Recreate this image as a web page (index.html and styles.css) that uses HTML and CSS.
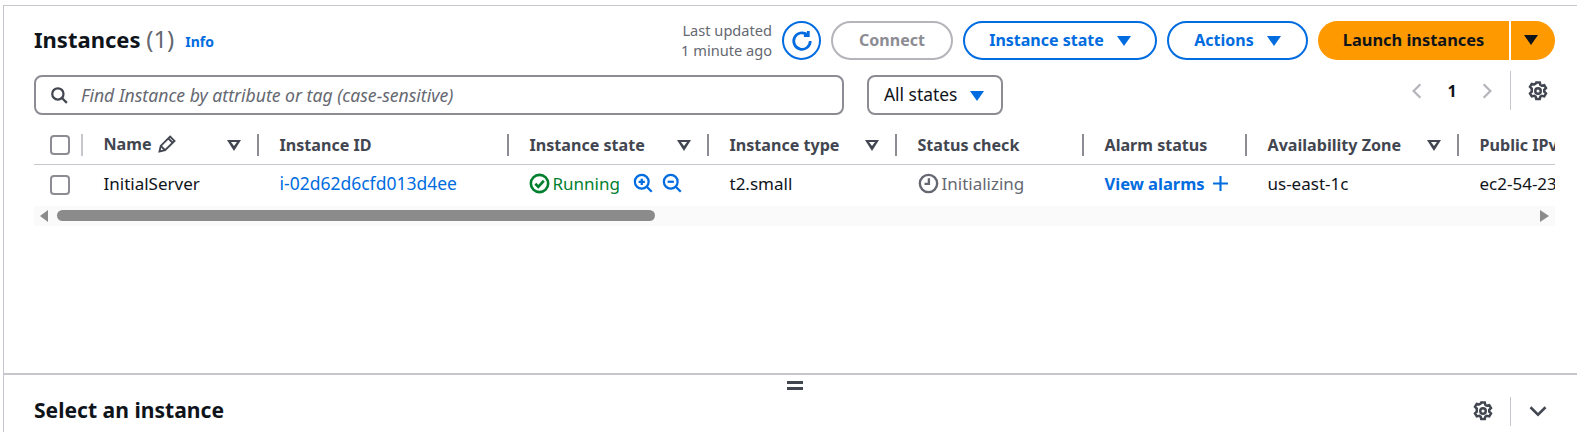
FILE: index.html
```html
<!DOCTYPE html>
<html lang="en">
<head>
  <meta charset="UTF-8">
  <title>Instances</title>
  <link rel="stylesheet" href="styles.css">
</head>
<body>
  <div class="page">
    <section class="pane">
      <div class="toolbar">
        <h1 class="title">Instances <span class="count">(1)</span></h1>
        <a class="info" href="#">Info</a>
        <div class="actions">
          <div class="updated">Last updated<br>1 minute ago</div>
          <button class="btn btn-round" aria-label="Refresh">
            <svg viewBox="0 0 16 16" width="22" height="22" class="ico-line"><path d="M14 8a6 6 0 1 1-2.2-4.6"/><path d="M12.6 .8v3.2H9.4"/></svg>
          </button>
          <button class="btn btn-off btn-connect">Connect</button>
          <button class="btn btn-state">Instance state <i class="caret"></i></button>
          <button class="btn btn-actions">Actions <i class="caret"></i></button>
          <div class="launch">
            <button class="launch-main">Launch instances</button>
            <button class="launch-drop" aria-label="More"><i class="caret caret-dark"></i></button>
          </div>
        </div>
      </div>

      <div class="filters">
        <div class="search">
          <svg viewBox="0 0 16 16" width="18" height="18" class="ico-search"><circle cx="7" cy="7" r="5"/><path d="M10.6 10.6 15 15"/></svg>
          <span class="placeholder">Find Instance by attribute or tag (case-sensitive)</span>
        </div>
        <div class="select"><span class="select-label">All states</span> <i class="caret"></i></div>
        <div class="pager">
          <svg viewBox="0 0 16 16" width="18" height="18" class="ico-pager"><path d="M11 2 5 8l6 6"/></svg>
          <span class="page-no">1</span>
          <svg viewBox="0 0 16 16" width="18" height="18" class="ico-pager"><path d="m5 2 6 6-6 6"/></svg>
          <span class="vline"></span>
          <svg viewBox="0 0 16 16" width="20" height="20" class="ico-gear"><path d="M6.600 1.200h2.800l.5 1.900 1.200.7 1.900-.5 1.400 2.400-1.400 1.400v1.400l1.400 1.400-1.400 2.400-1.900-.5-1.200.7-.5 1.900H6.600l-.5-1.900-1.200-.7-1.900.5-1.400-2.400 1.400-1.400V6.100L1.600 4.700 3 2.300l1.900.5 1.200-.7z"/><circle cx="8" cy="8" r="2.200"/></svg>
        </div>
      </div>

      <div class="table-wrap">
        <table class="table">
          <colgroup>
            <col class="c-check"><col class="c-name"><col class="c-id"><col class="c-state"><col class="c-type"><col class="c-status"><col class="c-alarm"><col class="c-zone"><col class="c-dns">
          </colgroup>
          <thead>
            <tr>
              <th><div class="th th-check"><span class="checkbox"></span></div></th>
              <th><div class="th">
                <span class="th-name">Name
                  <svg viewBox="0 0 16 16" width="20" height="20" class="ico-pencil"><path d="M2 14l1-4.500L10.500 2l3.500 3.500L6.500 13z"/><path d="M3 9.500 6.500 13"/><path d="M9 3.500l3.500 3.500"/></svg>
                </span>
                <i class="sort"></i></div></th>
              <th><div class="th">Instance ID</div></th>
              <th><div class="th">Instance state <i class="sort"></i></div></th>
              <th><div class="th">Instance type <i class="sort"></i></div></th>
              <th><div class="th">Status check</div></th>
              <th><div class="th">Alarm status</div></th>
              <th><div class="th">Availability Zone <i class="sort"></i></div></th>
              <th><div class="th th-last">Public IPv4 DNS</div></th>
            </tr>
          </thead>
          <tbody>
            <tr>
              <td class="td-check"><span class="checkbox"></span></td>
              <td>InitialServer</td>
              <td><a class="link" href="#">i-02d62d6cfd013d4ee</a></td>
              <td>
                <div class="state">
                  <svg viewBox="0 0 16 16" width="21" height="21" class="ico-ok"><circle cx="8" cy="8" r="6.600"/><path d="m4.800 8.200 2.300 2.300 4.200-4.600"/></svg>
                  <span class="running">Running</span>
                  <svg viewBox="0 0 16 16" width="20" height="20" class="ico-zoom zoom-in"><circle cx="7" cy="7" r="5.500"/><path d="M11 11l4 4"/><path d="M4.500 7h5M7 4.500v5"/></svg>
                  <svg viewBox="0 0 16 16" width="20" height="20" class="ico-zoom"><circle cx="7" cy="7" r="5.500"/><path d="M11 11l4 4"/><path d="M4.500 7h5"/></svg>
                </div>
              </td>
              <td>t2.small</td>
              <td>
                <div class="status">
                  <svg viewBox="0 0 16 16" width="21" height="21" class="ico-clock"><circle cx="8" cy="8" r="6.600"/><path d="M8.300 4v4.300H5"/></svg>
                  Initializing
                </div>
              </td>
              <td>
                <a class="alarms" href="#">View alarms
                  <svg viewBox="0 0 16 16" width="17" height="17" class="ico-plus"><path d="M8 1v14M1 8h14"/></svg>
                </a>
              </td>
              <td>us-east-1c</td>
              <td>ec2-54-234-10-20.compute-1.amazonaws.com</td>
            </tr>
          </tbody>
        </table>
        <div class="scrollbar">
          <i class="arrow-left"></i>
          <div class="thumb"></div>
          <i class="arrow-right"></i>
        </div>
      </div>
    </section>

    <section class="bottom">
      <div class="handle"></div>
      <h2 class="subtitle">Select an instance</h2>
      <div class="bottom-tools">
        <svg viewBox="0 0 16 16" width="20" height="20" class="ico-gear"><path d="M6.600 1.200h2.800l.5 1.900 1.200.7 1.900-.5 1.400 2.400-1.400 1.400v1.400l1.400 1.400-1.400 2.400-1.900-.5-1.200.7-.5 1.900H6.600l-.5-1.900-1.200-.7-1.900.5-1.400-2.400 1.400-1.400V6.100L1.600 4.700 3 2.300l1.900.5 1.200-.7z"/><circle cx="8" cy="8" r="2.200"/></svg>
        <span class="vline"></span>
        <svg viewBox="0 0 16 16" width="20" height="20" class="ico-chevron"><path d="m2 5 6 6 6-6"/></svg>
      </div>
    </section>
  </div>
</body>
</html>
```

FILE: styles.css
```css
* {
  box-sizing: border-box;
}
html, body {
  height: 100%;
}
body {
  margin: 0;
  background: #fff;
  color: #0f141a;
  font-family: "Noto Sans", "Open Sans", sans-serif;
  font-size: 17px;
  overflow: hidden;
}
svg {
  fill: none;
  stroke: currentColor;
  stroke-width: 2;
  flex: none;
}
.page {
  margin: 5px 0 0 3px;
  height: 427px;
  border-top: 1px solid #c6c6cd;
  border-left: 1px solid #c6c6cd;
  overflow: hidden;
}
.pane {
  height: 367px;
  padding: 15px 22px 0 30px;
}

/* top row */
.toolbar {
  display: flex;
  align-items: center;
  height: 39px;
}
.title {
  margin: 0 0 4px;
  font-size: 22px;
  font-weight: 700;
  line-height: 28px;
}
.count {
  font-weight: 400;
  font-size: 24px;
  color: #656871;
}
.info {
  margin: 1px 0 0 11px;
  font-size: 14px;
  font-weight: 700;
  color: #006ce0;
  text-decoration: none;
}
.actions {
  display: flex;
  align-items: center;
  margin-left: auto;
}
.updated {
  color: #656871;
  font-size: 14.600px;
  line-height: 20px;
  text-align: right;
  margin: -1px 10px 0 0;
}
.btn {
  height: 39px;
  border: 2px solid #006ce0;
  border-radius: 20px;
  background: #fff;
  color: #006ce0;
  font: 700 16px "Noto Sans", sans-serif;
  display: flex;
  align-items: center;
  justify-content: center;
  gap: 13px;
  padding: 0 0 2px;
  margin-right: 10px;
}
.btn-round {
  width: 39px;
  padding: 0;
}
.btn-off {
  border-color: #b4b4bb;
  color: #8c8c94;
}
.btn-connect {
  width: 122px;
}
.btn-state {
  width: 194px;
}
.btn-actions {
  width: 141px;
}
.caret {
  display: inline-block;
  width: 0;
  height: 0;
  margin-top: 2px;
  border-left: 7px solid transparent;
  border-right: 7px solid transparent;
  border-top: 10px solid #006ce0;
}
.caret-dark {
  margin-top: 0;
  border-top-color: #0f141a;
}
.launch {
  display: flex;
  height: 39px;
  gap: 2px;
}
.launch button {
  border: 0;
  background: #ff9900;
  color: #0f141a;
  font: 700 16.400px "Noto Sans", sans-serif;
  padding: 0 0 2px;
}
.launch-main {
  width: 191px;
  border-radius: 20px 0 0 20px;
}
.launch-drop {
  width: 44px;
  border-radius: 0 20px 20px 0;
  display: flex;
  align-items: center;
  justify-content: center;
  padding-right: 4px !important;
}

/* search row */
.filters {
  display: flex;
  align-items: flex-start;
  margin-top: 15px;
}
.search {
  width: 810px;
  height: 40px;
  border: 2px solid #8c8c94;
  border-radius: 8px;
  display: flex;
  align-items: center;
  padding-left: 14px;
  gap: 13px;
}
.ico-search {
  color: #424650;
}
.placeholder {
  font-style: italic;
  color: #656871;
  font-size: 17.600px;
  margin-bottom: 1px;
}
.select {
  width: 136px;
  height: 40px;
  margin-left: 23px;
  border: 2px solid #8c8c94;
  border-radius: 8px;
  display: flex;
  align-items: center;
  padding-left: 15px;
  gap: 13px;
  font-size: 17.400px;
}
.select-label {
  margin-bottom: 2px;
}
.pager {
  margin-left: auto;
  margin-top: -4px;
  padding-right: 7px;
  display: flex;
  align-items: center;
  height: 39px;
  color: #b4b4bb;
}
.page-no {
  width: 52px;
  text-align: center;
  font-size: 16px;
  font-weight: 700;
  color: #0f141a;
}
.vline {
  width: 1px;
  height: 39px;
  background: #c6c6cd;
  margin: 0 17px 0 14px;
}
.ico-gear {
  color: #424650;
}

/* table */
.table-wrap {
  margin-top: 11px;
  overflow: hidden;
}
.table {
  border-collapse: collapse;
  table-layout: fixed;
  width: 1725px;
}
.c-check { width: 49px; }
.c-name { width: 176px; }
.c-id { width: 250px; }
.c-state { width: 200px; }
.c-type { width: 188px; }
.c-status { width: 187px; }
.c-alarm { width: 163px; }
.c-zone { width: 212px; }
.c-dns { width: 300px; }
th {
  padding: 8px 0;
  border-bottom: 1px solid #c6c6cd;
  text-align: left;
}
.th {
  display: flex;
  align-items: center;
  justify-content: space-between;
  height: 22px;
  padding: 0 16px 0 20.500px;
  border-right: 2px solid #8c8c94;
  color: #424650;
  font-size: 16.100px;
  line-height: 20px;
  font-weight: 700;
  white-space: nowrap;
}
.th-check {
  justify-content: flex-start;
  padding-left: 16px;
  border-right-color: #c6c6cd;
}
.th-last {
  border-right: 0;
}
.th-name {
  display: flex;
  align-items: center;
  gap: 5px;
  margin-bottom: 3px;
}
.ico-pencil {
  stroke-width: 1.500;
}
.sort {
  width: 0;
  height: 0;
  position: relative;
  border-left: 7px solid transparent;
  border-right: 7px solid transparent;
  border-top: 11px solid #424650;
}
/* hollow middle of the sort triangle */
.sort::after {
  content: "";
  position: absolute;
  left: -3px;
  top: -9px;
  border-left: 3px solid transparent;
  border-right: 3px solid transparent;
  border-top: 4px solid #fff;
}
td {
  height: 41px;
  padding: 0 0 4px 20.500px;
  white-space: nowrap;
  overflow: hidden;
}
.td-check {
  padding-left: 16px;
  padding-top: 3px;
}
.checkbox {
  display: block;
  flex: none;
  width: 20px;
  height: 20px;
  border: 2px solid #8c8c94;
  border-radius: 4px;
}
.link {
  color: #006ce0;
  text-decoration: none;
  font-size: 17.500px;
}
.state, .status {
  display: flex;
  align-items: center;
}
.ico-ok {
  color: #00802f;
  margin: 0 3px 0 -1px;
}
.running {
  color: #00802f;
}
.ico-zoom {
  color: #006ce0;
  margin-left: 9px;
  stroke-width: 1.800;
}
.zoom-in {
  margin-left: 13px;
}
.status {
  color: #656871;
  gap: 3px;
}
.ico-clock {
  stroke-width: 1.800;
}
.alarms {
  display: flex;
  align-items: center;
  gap: 7px;
  color: #006ce0;
  font-size: 16.500px;
  font-weight: 700;
  text-decoration: none;
}
.scrollbar {
  display: flex;
  align-items: center;
  height: 20px;
  background: #fafafa;
  padding: 0 6px;
}
.arrow-left {
  border-top: 6px solid transparent;
  border-bottom: 6px solid transparent;
  border-right: 8px solid #8b8b8b;
}
.arrow-right {
  margin-left: auto;
  border-top: 6px solid transparent;
  border-bottom: 6px solid transparent;
  border-left: 9px solid #8b8b8b;
}
.thumb {
  width: 598px;
  height: 11px;
  margin-left: 9px;
  border-radius: 6px;
  background: #8b8b8b;
}

/* split panel below */
.bottom {
  position: relative;
  display: flex;
  align-items: center;
  padding: 21px 29px 0 30px;
  border-top: 2px solid #c6c6cd;
}
.handle {
  position: absolute;
  left: 783px;
  top: 6px;
  width: 16px;
  height: 9px;
  border-top: 3px solid #424650;
  border-bottom: 3px solid #424650;
}
.subtitle {
  margin: 0 0 2px;
  font-size: 21.100px;
  font-weight: 700;
  line-height: 28px;
}
.bottom-tools {
  margin-left: auto;
  display: flex;
  align-items: center;
}
.bottom-tools .vline {
  height: 29px;
  margin: 0 17px;
}
.ico-chevron {
  color: #424650;
}
```
